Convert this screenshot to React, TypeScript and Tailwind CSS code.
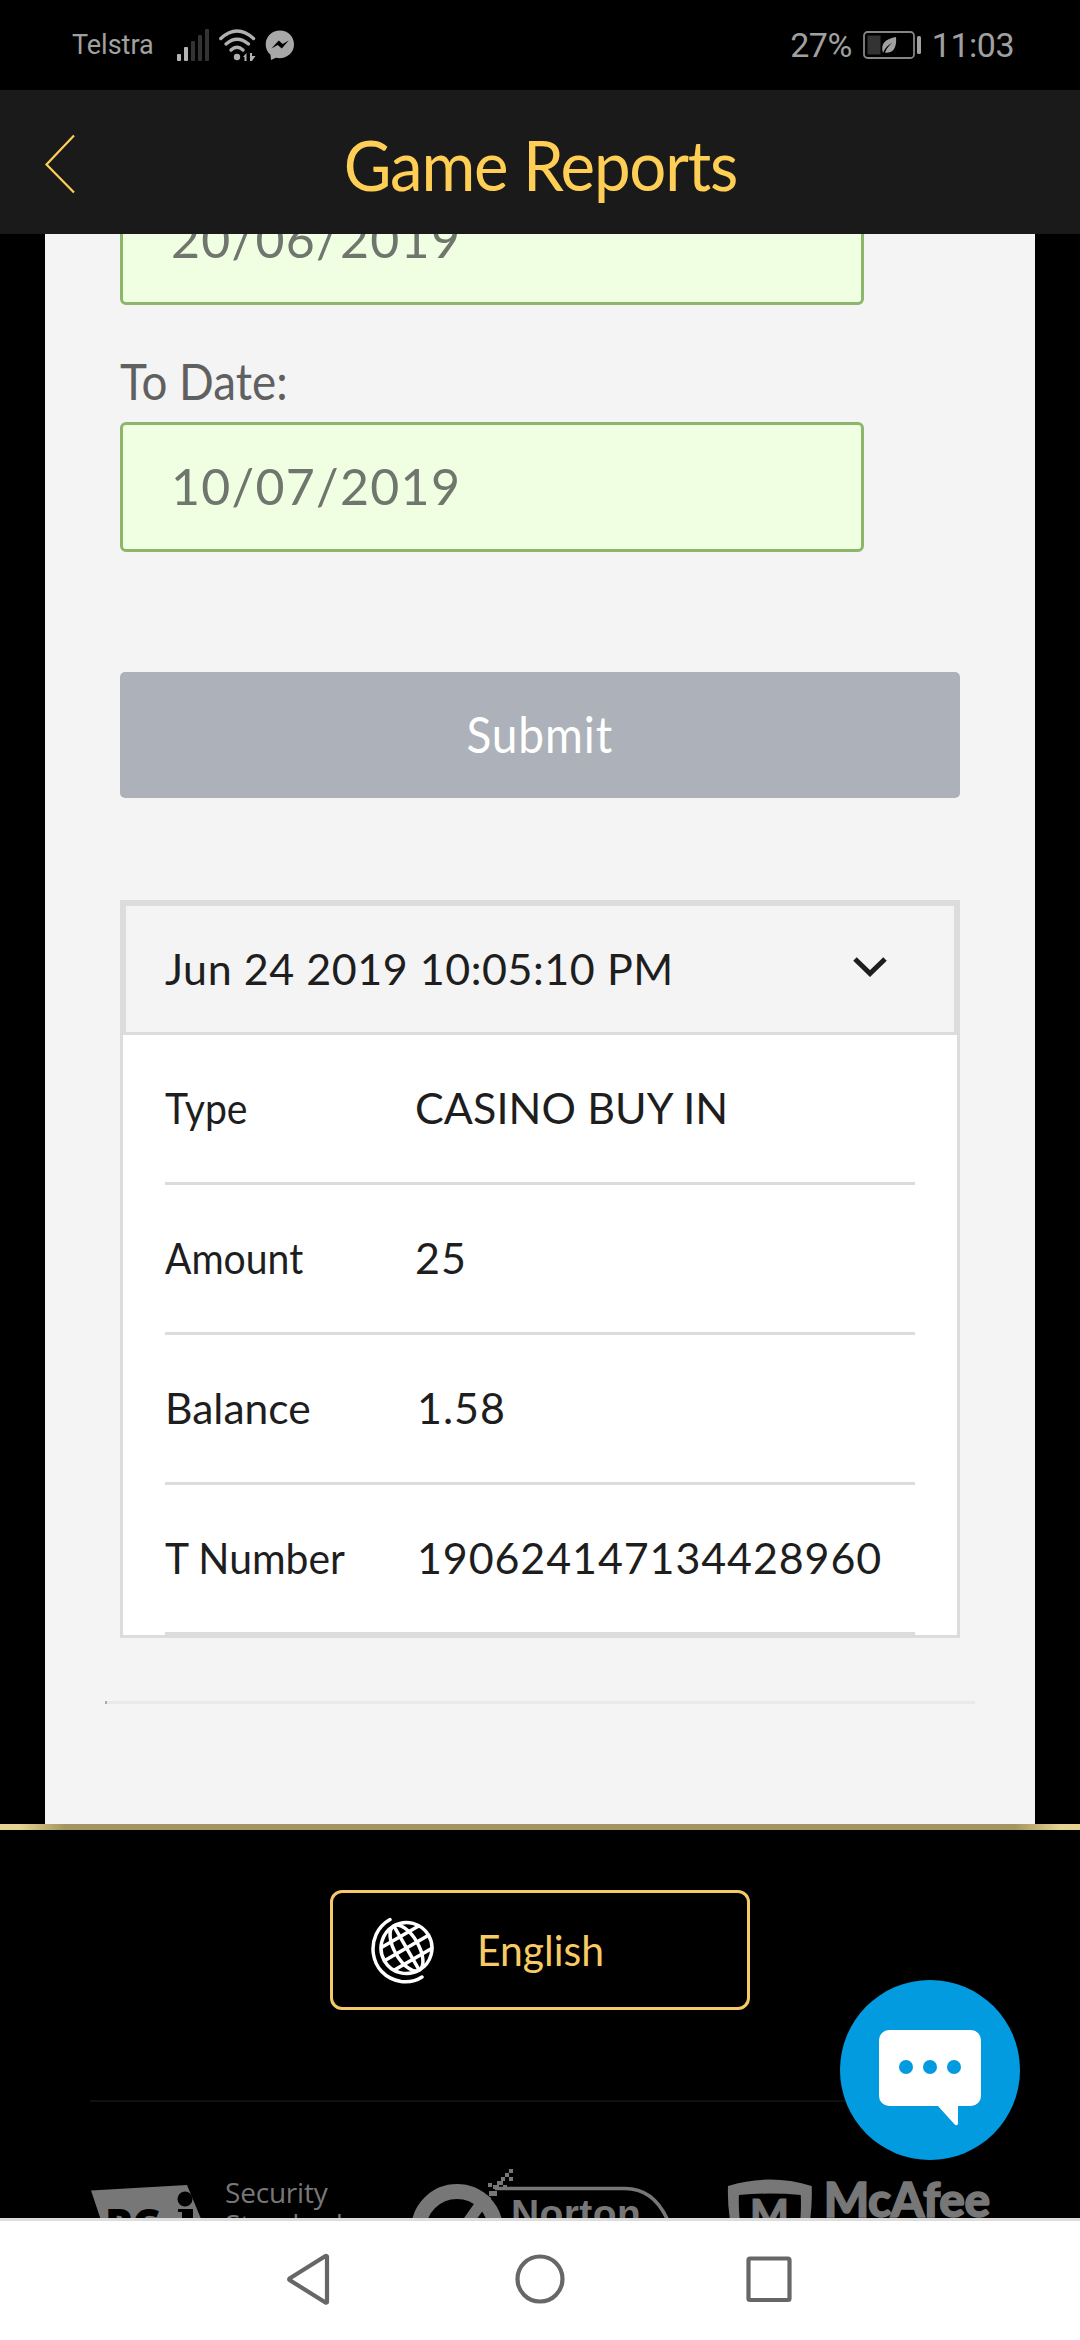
import type { ReactNode } from "react";

const report = {
  date: "Jun 24 2019 10:05:10 PM",
  rows: [
    { label: "Type", value: "CASINO BUY IN", labelClass: "scale-x-[0.91]", valueClass: "tracking-[0.1px]" },
    { label: "Amount", value: "25", labelClass: "scale-x-[0.91]", valueClass: "tracking-[1px]" },
    { label: "Balance", value: "1.58", labelClass: "scale-x-[0.99]", valueClass: "tracking-[1px] pl-[2px]" },
    { label: "T Number", value: "190624147134428960", labelClass: "scale-x-[0.95]", valueClass: "tracking-[0.9px] pl-[2px]" },
  ],
};

function StatusBar() {
  return (
    <div className="flex h-[90px] shrink-0 items-center bg-black pr-[66px] pl-[72px] font-['Roboto',sans-serif] text-[#a0a0a0]">
      <span className="text-[27px] leading-[60px]">Telstra</span>
      <svg className="ml-[23px] h-[32px] w-[32px]" viewBox="0 0 32 32">
        <rect x="0" y="25" width="4" height="7" rx="1" fill="#b4b4b4" />
        <rect x="7" y="18" width="4" height="14" rx="1" fill="#b4b4b4" />
        <rect x="14" y="12" width="4" height="20" rx="1" fill="#333" />
        <rect x="21" y="6" width="4" height="26" rx="1" fill="#333" />
        <rect x="28" y="0" width="4" height="32" rx="1" fill="#333" />
      </svg>
      <svg className="ml-[10px] h-[32px] w-[37px]" viewBox="0 0 37 32" fill="none" stroke="#b0b0b0" strokeWidth="3.400" strokeLinecap="round">
        <path d="M1.800 9.500Q18 -5.500 34.500 9.500" />
        <path d="M7 15Q18 5.500 29.500 15" />
        <path d="M12 21Q18 15.500 24 21" />
        <circle cx="18" cy="28" r="3.200" fill="#b0b0b0" stroke="none" />
        <path d="M24 28l3.500-4v8h-2v-4zM31 24h2v3h3.500L33 32h-2z" fill="#b0b0b0" stroke="none" />
      </svg>
      <svg className="ml-[9px] h-[30px] w-[30px]" viewBox="0 0 30 30">
        <path d="M15 0.500C7 .5.700 6.500.700 14.500c0 4.200 1.800 7.700 4.800 10.300L6 30l5-2.200c8.500 2 18-3.500 18-13.300C29 6.500 23 .5 15 .5z" fill="#a8a8a8" />
        <path d="M6.500 18.500l7.200-8 4 3.600 6-3.600-6.900 8-4.100-3.600z" fill="#000" />
      </svg>
      <span className="ml-auto text-[34px] leading-[60px] tracking-[-0.5px]">27%</span>
      <svg className="ml-[11px] h-[28px] w-[60px]" viewBox="0 0 60 28">
        <rect x="1" y="1" width="50" height="26" rx="3.500" fill="none" stroke="#858585" strokeWidth="1.800" />
        <rect x="4.500" y="4.500" width="13" height="19" fill="#333" />
        <path d="M20 22c-3-10 3-14 13-16 1 9-2 17-11 15.500 2-5 5-8 7.500-10C25 14 22 17 20 22z" fill="#a0a0a0" />
        <rect x="54" y="5" width="4" height="18" rx="1.500" fill="#a0a0a0" />
      </svg>
      <span className="ml-[9px] text-[34px] leading-[60px] tracking-[-0.5px]">11:03</span>
    </div>
  );
}

function Header() {
  return (
    <div className="grid h-[144px] shrink-0 grid-cols-[1fr_auto_1fr] items-center bg-[#1a1a1a] text-[#ffce54]">
      <svg className="mt-1 ml-[44px] h-[60px] w-[32px]" viewBox="0 0 32 60" fill="none" stroke="currentColor" strokeWidth="2.200">
        <path d="M30 1.500L2.500 30.500L30 58.500" />
      </svg>
      <h1 className="scale-x-[0.935] pt-1 text-[70px] leading-none tracking-[-1.300px]">Game Reports</h1>
    </div>
  );
}

function DateInput({ children }: { children: ReactNode }) {
  return (
    <div className="flex h-[130px] w-[744px] shrink-0 items-center rounded-[6px] border-[3px] border-[#8cb66b] bg-[#f0ffe2] pb-[2px] pl-[48px] text-[50px] tracking-[1.300px] text-[#70756d]">
      {children}
    </div>
  );
}

function ReportCard() {
  return (
    <div className="mt-[102px] border-[3px] border-[#dcdcdc] bg-white text-[43px] leading-[52px] text-[#1e1e1e]">
      <div className="flex h-[132px] items-center justify-between border-[3px] border-[#dcdcdc] bg-[#f4f4f4] pr-[66px] pl-[39px]">
        <span className="tracking-[0.55px]">{report.date}</span>
        <svg className="-mt-1 h-[22px] w-[36px]" viewBox="0 0 36 22" fill="none" stroke="currentColor" strokeWidth="5">
          <path d="M3 3l15 14.500L33 3" />
        </svg>
      </div>
      <div className="px-[42px]">
        {report.rows.map((row) => (
          <div key={row.label} className="flex h-[150px] items-center border-b-[3px] border-[#dcdcdc] pb-[2px]">
            <span className={`w-[250px] origin-left ${row.labelClass}`}>{row.label}</span>
            <span className={`whitespace-nowrap ${row.valueClass}`}>{row.value}</span>
          </div>
        ))}
      </div>
    </div>
  );
}

function GlobeIcon() {
  return (
    <svg className="h-[68px] w-[64px]" viewBox="0 0 64 68" fill="none" stroke="#fff" strokeWidth="3.500" strokeLinecap="round">
      <g transform="rotate(-30 35.500 32)">
        <circle cx="35.500" cy="32" r="25.500" />
        <ellipse cx="35.500" cy="32" rx="12" ry="25.500" />
        <path d="M35.500 6.500v51M10 32h51M14 19h43M14 45h43" />
      </g>
      <path d="M19 3.500C-7 18-3 60 30 65.500c8 1 15-.5 21-4.500" />
    </svg>
  );
}

function PciLogo() {
  return (
    <div className="flex">
      <svg className="h-[60px] w-[120px]" viewBox="0 0 120 60">
        <path d="M1 12.500L97 7l22 53H17z" fill="#777" />
        <text x="15" y="61" fontFamily="Open Sans" fontWeight="800" fontSize="43" fill="#000">
          PC
        </text>
        <circle cx="95" cy="21" r="7.500" fill="#000" />
        <path d="M88 31h15v29h-11V34h-4z" fill="#000" />
      </svg>
      <div className="-mt-[2px] ml-[15px] font-['Open_Sans',sans-serif] text-[28px] leading-[32px] tracking-[-0.2px] text-[#777]">
        <p>Security</p>
        <p>Standards</p>
      </div>
    </div>
  );
}

function NortonLogo() {
  return (
    <svg className="h-[60px] w-[270px]" viewBox="0 0 270 60" fill="none">
      <circle cx="46" cy="61" r="38.500" stroke="#777" strokeWidth="15" />
      <path d="M27 54l18 16 31-44" stroke="#777" strokeWidth="11" />
      <path d="M84 19.500H214c22 0 37 14 46 40" stroke="#777" strokeWidth="3.500" />
      <path d="M98 0h4v4h-4zM94 4h4v4h-4zM98 8h4v4h-4zM90 8h4v4h-4zM86 12h6v4h-6zM82 16h6v4h-6zM92 16h4v4h-4zM77 14h4v4h-4zM78 22h8v5h-8z" fill="#777" />
      <text x="100" y="58" fontFamily="Liberation Sans" fontWeight="700" fontSize="39" fill="#777" letterSpacing="0.4">
        Norton
      </text>
    </svg>
  );
}

function McAfeeLogo() {
  return (
    <svg className="h-[60px] w-[265px]" viewBox="0 0 265 60">
      <path d="M2 8Q44-5 86 8Q87 35 81 60H72q4-20 3-43Q44 14 13 17q-1 23 4 43H8Q1 35 2 8z" fill="#777" />
      <text x="24" y="51" fontFamily="Lato" fontWeight="900" fontSize="41" fill="#777" stroke="#777">
        M
      </text>
      <text x="98" y="39.500" fontFamily="Lato" fontWeight="900" fontSize="48" fill="#777" stroke="#777" strokeWidth="1.500" letterSpacing="-0.4">
        McAfee
      </text>
    </svg>
  );
}

function Footer() {
  return (
    <div className="flex h-[388px] shrink-0 flex-col items-center overflow-hidden bg-black">
      <button className="mt-[60px] flex h-[120px] w-[420px] shrink-0 items-center rounded-[12px] border-[3px] border-[#f5c969] pl-[38px] text-[43px] text-[#f7ca63]">
        <GlobeIcon />
        <span className="ml-[42px] origin-left scale-x-[0.95]">English</span>
      </button>
      <div className="mt-[90px] h-[2px] w-[900px] shrink-0 bg-[#101010]" />
      <div className="mt-[76px] flex w-[900px] shrink-0">
        <div className="w-[322px]">
          <PciLogo />
        </div>
        <div className="-mt-[9px] w-[316px]">
          <NortonLogo />
        </div>
        <McAfeeLogo />
      </div>
    </div>
  );
}

function NavBar() {
  return (
    <div className="h-[122px] shrink-0 border-t-[3px] border-[#dcdcdc] bg-white">
      <svg className="mx-auto mt-[32px] h-[52px] w-[510px]" viewBox="285 2253 510 52" fill="none" stroke="#676767" strokeWidth="4.200" strokeLinejoin="round">
        <path d="M327 2256.500v45.500a1 1 0 0 1-1.500.500L289.500 2280a1 1 0 0 1 0-1.500L325.500 2256a1 1 0 0 1 1.500.500z" />
        <circle cx="540" cy="2279" r="22.500" />
        <rect x="748.500" y="2258.500" width="41" height="41.500" rx="1.500" />
      </svg>
    </div>
  );
}

function ChatButton() {
  return (
    <button className="absolute top-[1980px] left-[840px] flex size-[180px] items-center justify-center rounded-full bg-[#039be0]">
      <svg className="mt-[15px] h-[96px] w-[102px]" viewBox="0 0 102 96">
        <path d="M10 0H92a10 10 0 0 1 10 10V66a10 10 0 0 1-10 10H79V93c0 2.500-2 3-3.500 1.200L59 76H10A10 10 0 0 1 0 66V10A10 10 0 0 1 10 0z" fill="#fff" />
        <g fill="#039be0">
          <circle cx="27" cy="37" r="7" />
          <circle cx="51" cy="37" r="7" />
          <circle cx="75" cy="37" r="7" />
        </g>
      </svg>
    </button>
  );
}

export default function App() {
  return (
    <div className="relative flex h-[2340px] w-[1080px] flex-col overflow-hidden bg-black font-['Lato',sans-serif]">
      <StatusBar />
      <Header />
      <main className="mx-[45px] h-[1590px] shrink-0 overflow-hidden bg-[#f4f4f4] px-[75px]">
        {/* scrolled partly under the header */}
        <div className="-mt-[59px]">
          <DateInput>20/06/2019</DateInput>
        </div>
        <p className="mt-[46px] h-[71px] origin-left scale-x-[0.915] text-[50px] leading-[60px] text-[#606060]">To Date:</p>
        <DateInput>10/07/2019</DateInput>
        <button className="mt-[120px] flex h-[126px] w-full items-center justify-center rounded-[5px] bg-[#adb1b9] pb-[2px] text-[50px] text-white">
          <span className="scale-x-[0.92] tracking-[1px]">Submit</span>
        </button>
        <ReportCard />
        <div className="-mx-[15px] mt-[63px] h-[3px] border-l-2 border-[#aaa] bg-[#e9e9e9]" />
      </main>
      <div className="h-[6px] shrink-0 bg-[linear-gradient(90deg,#e6d391_20px,#a4945f_65px,#a4945f_1015px,#e6d391_1060px)]" />
      <Footer />
      <NavBar />
      <ChatButton />
    </div>
  );
}
